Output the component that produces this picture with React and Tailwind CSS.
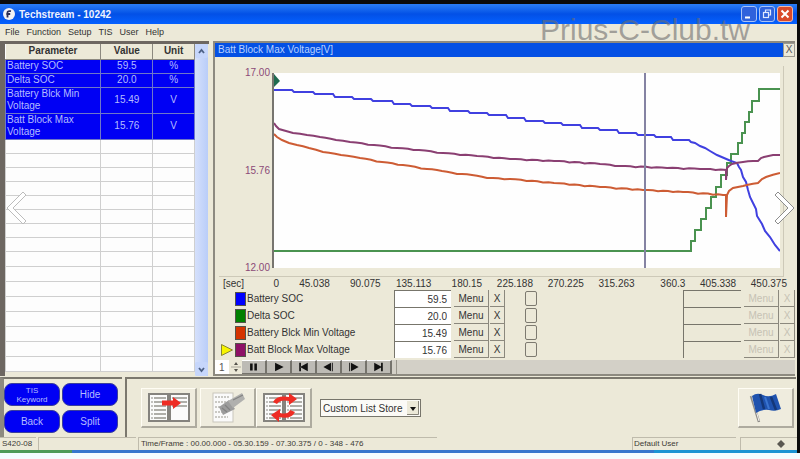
import React, { useState } from "react";

const parameters = [
  { name: "Battery SOC", value: "59.5", unit: "%" },
  { name: "Delta SOC", value: "20.0", unit: "%" },
  { name: "Battery Blck Min Voltage", value: "15.49", unit: "V", tall: true },
  { name: "Batt Block Max Voltage", value: "15.76", unit: "V", tall: true },
];

const signals = [
  { name: "Battery SOC", value: "59.5", color: "bg-[#0000ff]" },
  { name: "Delta SOC", value: "20.0", color: "bg-[#008000]" },
  { name: "Battery Blck Min Voltage", value: "15.49", color: "bg-[#d43300]" },
  { name: "Batt Block Max Voltage", value: "15.76", color: "bg-[#8e1266]", active: true },
];

const ticks = [
  "45.038", "90.075", "135.113", "180.15", "225.188",
  "270.225", "315.263", "360.3", "405.338", "450.375",
];

const menus = ["File", "Function", "Setup", "TIS", "User", "Help"];

// chart points, in plot units (506 x 195)
const socSteps = [
  [0, 17], [18, 19], [39, 21], [59, 24], [78, 26], [97, 28], [118, 31], [136, 33],
  [156, 35], [174, 38], [194, 40], [213, 42], [232, 45], [250, 48], [269, 50],
  [287, 52], [306, 55], [324, 57], [343, 60], [362, 62], [380, 64], [397, 67], [413, 67],
];
const socDrop = [
  [417, 69], [421, 70], [426, 73], [431, 75], [436, 78], [443, 82], [450, 85], [457, 88],
  [463, 90], [465, 94], [467, 97], [469, 104], [472, 109], [474, 117], [476, 124],
  [479, 130], [482, 136], [483, 143], [488, 151], [491, 158], [496, 164], [501, 172], [506, 178],
];
const deltaSteps = [
  [0, 178], [417, 168], [421, 157], [427, 146], [432, 135], [437, 124], [442, 114],
  [447, 102], [453, 90], [457, 81], [464, 70], [468, 60], [471, 49], [475, 39],
  [478, 28], [485, 16], [506, 16],
];
const maxVoltage = [
  [0, 50], [2, 53], [5, 56], [12, 58], [19, 60], [33, 62], [46, 64], [62, 67], [76, 69],
  [100, 72], [123, 75], [145, 77], [169, 80], [203, 83], [236, 86], [280, 88], [326, 91],
  [346, 93], [393, 95], [426, 96], [452, 97], [452, 107], [453, 95], [455, 93], [458, 91],
  [469, 89], [484, 88], [487, 85], [490, 84], [499, 82], [506, 82],
];
const minVoltage = [
  [0, 61], [3, 64], [8, 67], [15, 70], [23, 72], [35, 75], [49, 79], [67, 82], [86, 85],
  [108, 89], [129, 92], [153, 96], [168, 98], [183, 101], [198, 102], [213, 105],
  [236, 106], [280, 110], [326, 114], [369, 117], [409, 119], [449, 122], [452, 122],
  [452, 144], [453, 122], [455, 118], [459, 115], [469, 113], [484, 110], [488, 106],
  [492, 104], [506, 100],
];

function wobble(points) {
  const out = [];
  points.forEach(([x, y], i) => {
    out.push(`${x},${y}`);
    const next = points[i + 1];
    if (next && next[0] - x > 10) {
      const n = Math.floor((next[0] - x) / 5);
      for (let k = 1; k < n; k++) {
        const t = k / n;
        const jitter = k % 3 === 0 ? 0.5 : -0.3;
        out.push(`${x + (next[0] - x) * t},${y + (next[1] - y) * t + jitter}`);
      }
    }
  });
  return out.join(" ");
}

function stairs(points, slope) {
  const out = [`${points[0][0]},${points[0][1]}`];
  for (let i = 1; i < points.length; i++) {
    out.push(`${points[i][0]},${points[i - 1][1]}`);
    out.push(`${points[i][0] + slope},${points[i][1]}`);
  }
  return out.join(" ");
}

function Chart() {
  const line = { fill: "none", strokeWidth: 2, vectorEffect: "non-scaling-stroke" };
  return (
    <svg
      viewBox="0 0 506 195"
      preserveAspectRatio="none"
      className="block h-[195px] w-full bg-[#fefefe]"
    >
      <polyline {...line} stroke="#4a9350" points={stairs(deltaSteps, 0)} />
      <polyline {...line} stroke="#4040e0" points={`${stairs(socSteps, 2)} ${socDrop.map((p) => p.join(",")).join(" ")}`} />
      <polyline {...line} stroke="#8a3f72" points={wobble(maxVoltage)} />
      <polyline {...line} stroke="#cd5c34" points={wobble(minVoltage)} />
      <line x1="371" y1="0" x2="371" y2="195" stroke="#8583a3" strokeWidth="2" vectorEffect="non-scaling-stroke" />
      <path d="M0 1L6 8L0 14Z" fill="#1f6b50" />
    </svg>
  );
}

function TitleBar() {
  return (
    <header className="flex h-5 items-center gap-1 bg-linear-to-b from-[#2b7df5] via-[#0350e6] to-[#0561ff] pr-1 pl-[3px]">
      <svg viewBox="0 0 12 12" className="size-3">
        <circle cx="6" cy="6" r="6" fill="#f1f1f4" />
        <path d="M4.5 9.5V4.5Q4.500 2.600 8 3.200M3.300 6H7.200" stroke="#2c2f55" strokeWidth="1.800" fill="none" />
      </svg>
      <h1 className="grow text-[10px] font-bold text-[#eef3ff]">Techstream - 10242</h1>
      <div className="flex gap-[2px]">
        <button type="button" aria-label="Minimize" className="size-4 rounded-[3px] border border-[#a9c3f5] bg-[#2f62dc]">
          <svg viewBox="0 0 14 14"><path d="M3 10.500H8" stroke="#fff" strokeWidth="2" /></svg>
        </button>
        <button type="button" aria-label="Restore" className="size-4 rounded-[3px] border border-[#a9c3f5] bg-[#2f62dc]">
          <svg viewBox="0 0 14 14" fill="none" stroke="#dfe8ff" strokeWidth="1.200">
            <path d="M5.500 5V3H10.500V8H8.500" />
            <rect x="3.500" y="5.500" width="5" height="5" />
          </svg>
        </button>
        <button type="button" aria-label="Close" className="size-4 rounded-[3px] border border-[#f0b9a8] bg-[#d9492a]">
          <svg viewBox="0 0 14 14"><path d="M3.500 3.500L10.500 10.500M10.500 3.500L3.500 10.500" stroke="#fff" strokeWidth="2" /></svg>
        </button>
      </div>
    </header>
  );
}

function ParameterPanel() {
  return (
    <section className="flex w-[209px] shrink-0 border-t-[3px] border-l-[5px] border-[#6d6761] pr-[1px]">
      <table className="grow table-fixed border-collapse self-start bg-[#fdfdfd] text-[10px] leading-[12px]">
        <colgroup>
          <col className="w-[96px]" />
          <col className="w-[52px]" />
          <col className="w-[42px]" />
        </colgroup>
        <thead>
          <tr className="h-[15px] bg-[#ece9d8] text-[#333]">
            <th className="border-r border-b border-[#8c8980] p-0">Parameter</th>
            <th className="border-r border-b border-[#8c8980] p-0">Value</th>
            <th className="border-r border-b border-[#8c8980] p-0">Unit</th>
          </tr>
        </thead>
        <tbody>
          {parameters.map((p) => (
            <tr key={p.name} className={p.tall ? "h-[26px] bg-[#0000f4] text-[#b4bcff]" : "h-[14px] bg-[#0000f4] text-[#b4bcff]"}>
              <td className="border border-[#6f78c8] py-0 pr-3 pl-[1px]">{p.name}</td>
              <td className="border border-[#6f78c8] p-0 text-center">{p.value}</td>
              <td className="border border-[#6f78c8] p-0 text-center">{p.unit}</td>
            </tr>
          ))}
          {Array.from({ length: 16 }, (_, i) => (
            <tr key={i} className={i < 8 ? "h-[14px]" : "h-[15px]"}>
              <td className="border border-[#cfcfcf] p-0" />
              <td className="border border-[#cfcfcf] p-0" />
              <td className="border border-[#cfcfcf] p-0" />
            </tr>
          ))}
        </tbody>
      </table>
      <div className="flex w-[13px] shrink-0 flex-col justify-between bg-linear-to-r from-[#d5e0fb] to-[#b9cdf9]">
        <button type="button" aria-label="Scroll up" className="h-[14px] rounded-xs bg-[#c6d6fb]">
          <svg viewBox="0 0 13 14"><path d="M4 9L6.500 6L9 9" fill="none" stroke="#4d6185" strokeWidth="1.800" /></svg>
        </button>
        <button type="button" aria-label="Scroll down" className="h-[14px] rounded-xs bg-[#c6d6fb]">
          <svg viewBox="0 0 13 14"><path d="M4 6L6.500 9L9 6" fill="none" stroke="#4d6185" strokeWidth="1.800" /></svg>
        </button>
      </div>
    </section>
  );
}

function RowButtons({ name, disabled }) {
  const tone = disabled ? "text-[#c6c2b4]" : "text-[#333]";
  return (
    <>
      <button type="button" disabled={disabled} aria-label={`Menu ${name}`} className={`ml-[3px] h-[17px] w-[35px] border-r border-b border-[#8b887d] text-[10px] ${tone}`}>
        Menu
      </button>
      <button type="button" disabled={disabled} aria-label={`Remove ${name}`} className={`ml-[1px] h-[17px] w-[15px] border-r border-b border-[#8b887d] text-[10px] ${tone}`}>
        X
      </button>
    </>
  );
}

function SignalRow({ signal }) {
  return (
    <li className="flex h-[17px] items-center">
      <div className="flex w-[20px] shrink-0 justify-center pl-1">
        {signal.active && (
          <svg viewBox="0 0 14 14" className="size-[14px]">
            <path d="M1.500 1.500L12.500 7L1.500 12.500Z" fill="#f7f400" stroke="#8a8733" />
          </svg>
        )}
      </div>
      <span className={`h-[14px] w-[11px] shrink-0 border border-[#55534a] ${signal.color}`} />
      <label htmlFor={`value-${signal.name}`} className="w-[148px] shrink-0 pl-[1px] text-[10px] leading-[14px] text-[#333]">
        {signal.name}
      </label>
      <input
        id={`value-${signal.name}`}
        readOnly
        value={signal.value}
        className="h-[17px] w-[57px] shrink-0 border-t border-l border-[#77756b] bg-white pr-1 text-right text-[10px] text-[#333]"
      />
      <RowButtons name={signal.name} />
      <input
        type="checkbox"
        aria-label={`Select ${signal.name}`}
        className="ml-5 h-[15px] w-[12px] appearance-none rounded-[2px] border border-[#7d7a70]"
      />
      <input
        readOnly
        disabled
        aria-label={`Second value ${signal.name}`}
        className="ml-auto h-[17px] w-[58px] border-t border-l border-[#77756b]"
      />
      <RowButtons name={`second ${signal.name}`} disabled />
    </li>
  );
}

const playback = [
  { label: "Pause", d: "M8 3H11V11H8ZM13 3H16V11H13Z" },
  { label: "Play", d: "M8 2L18 7L8 12Z" },
  { label: "First", d: "M17 2L8 7L17 12ZM7 2H9V12H7Z" },
  { label: "Step back", d: "M15 2L6 7L15 12ZM16 2H17V12H16Z" },
  { label: "Step forward", d: "M9 2L18 7L9 12ZM7 2H8V12H7Z" },
  { label: "Last", d: "M7 2L16 7L7 12ZM15 2H17V12H15Z" },
];

function GraphPanel() {
  return (
    <section className="flex min-w-0 grow flex-col border-t-2 border-b-2 border-l-2 border-[#8d8a80] bg-[#ece9d8]">
      <div className="flex h-[14px] items-center bg-[#0450e4]">
        <h2 className="grow pl-[3px] text-[10px] leading-[14px] text-[#b9d0ff]">Batt Block Max Voltage[V]</h2>
        <button type="button" aria-label="Close graph" className="h-[14px] w-[12px] border border-[#9b9a90] bg-[#ece9d8] text-[10px] leading-[12px] text-[#555]">
          X
        </button>
      </div>
      <div className="mt-[9px] mr-[11px] ml-1 flex border-r border-b border-[#cdc9b8] pr-[3px] pb-[1px]">
        <div className="flex w-[53px] shrink-0 flex-col justify-between pr-[2px] text-right text-[10px] leading-[14px] text-[#8b4a77]">
          <span>17.00</span>
          <span>15.76</span>
          <span>12.00</span>
        </div>
        <div className="mt-[7px] mb-[7px] min-w-0 grow border-l-2 border-[#77756f]">
          <Chart />
        </div>
      </div>
      <div className="flex pr-2 text-[10px] leading-[13px] text-[#333]">
        <span className="w-[50px] shrink-0 pl-2">[sec]</span>
        <span className="w-[14px] shrink-0 text-right">0</span>
        {ticks.map((t) => (
          <span key={t} className="min-w-0 flex-1 text-right">{t}</span>
        ))}
      </div>
      <ul className="mb-[2px]">
        {signals.map((s) => (
          <SignalRow key={s.name} signal={s} />
        ))}
      </ul>
      <div className="flex h-[14px] bg-[#d3d0c7]">
        <input aria-label="Speed" readOnly value="1" className="w-[14px] bg-white pl-1 text-[10px] text-[#555]" />
        <div className="flex w-[13px] flex-col items-center justify-center bg-[#ece9d8]">
          <svg viewBox="0 0 12 14" className="w-3">
            <path d="M4 5L6 2L8 5ZM4 9L6 12L8 9Z" fill="#55534c" />
            <path d="M1 7H11" stroke="#aaa79a" />
          </svg>
        </div>
        {playback.map((b) => (
          <button key={b.label} type="button" aria-label={b.label} className="w-[25px] border-t border-r-2 border-b border-t-white border-r-[#75736c] border-b-[#75736c] bg-[#bdbbb5]">
            <svg viewBox="0 0 24 14" className="h-3 w-full"><path d={b.d} fill="#111" /></svg>
          </button>
        ))}
        <div className="ml-1 grow border-l border-[#99968c]" />
      </div>
    </section>
  );
}

function Sheet({ x, half }) {
  return (
    <g>
      <rect x={x} y="1" width="19" height="27" fill="#fbfbfb" stroke="#85837e" strokeWidth="2" />
      <path
        d={half ? `M${x + 2} 5H${x + 17}M${x + 2} 9H${x + 17}M${x + 2} 13H${x + 17}` : `M${x + 5} 5H${x + 17}M${x + 5} 9H${x + 17}M${x + 5} 13H${x + 17}M${x + 5} 17H${x + 17}M${x + 5} 21H${x + 17}M${x + 5} 25H${x + 17}`}
        stroke="#97958f"
        strokeWidth="1.500"
      />
      {!half && <path d={`M${x + 3} 4V26`} stroke="#8b8984" strokeDasharray="2 2" />}
    </g>
  );
}

function ToolButton({ label, children }) {
  return (
    <button
      type="button"
      aria-label={label}
      className="flex h-10 w-14 shrink-0 items-center justify-center border-t border-r-2 border-b-2 border-l border-t-[#fffdf4] border-r-[#aeab9f] border-b-[#aeab9f] border-l-[#fffdf4] bg-[#efecde]"
    >
      {children}
    </button>
  );
}

function Toolbar() {
  const pill = "h-[23px] rounded-lg bg-[#0000f4] border border-[#3a3f9c] text-[#b4bcff]";
  return (
    <div className="flex gap-[3px] bg-[#ece9d8] pt-[1px] pr-[1px]">
      <div className="grid w-[122px] shrink-0 grid-cols-[56px_56px] content-center gap-x-[2px] gap-y-1 border-t-2 border-l-4 border-t-[#7b786e] border-l-[#8d8a80] py-1">
        <button type="button" className={`${pill} text-[8px] leading-[9px]`}>TIS<br />Keyword</button>
        <button type="button" className={`${pill} text-[10px]`}>Hide</button>
        <button type="button" className={`${pill} text-[10px]`}>Back</button>
        <button type="button" className={`${pill} text-[10px]`}>Split</button>
      </div>
      <div className="flex grow items-center border-t-2 border-l-2 border-[#7b786e] pr-[2px] pl-[14px]">
        <ToolButton label="Copy to list">
          <svg viewBox="0 0 42 29" className="w-[42px]">
            <Sheet x={1} />
            <Sheet x={22} half />
            <path d="M14 7.500H25V4L33 10L25 16V12.500H14Z" fill="#ee2c24" />
          </svg>
        </ToolButton>
        <span className="w-[3px]" />
        <ToolButton label="Search list">
          <svg viewBox="0 0 36 31" className="w-9">
            <rect x="3" y="1" width="20" height="29" fill="#fafafa" stroke="#c9c6bc" />
            <path d="M5 5H20M5 10H16M5 15H12M5 20H12M5 25H18" stroke="#bbb9b2" strokeWidth="1.500" strokeDasharray="2 1" />
            <path d="M9 15L19 8L25 17L13 23Z" fill="#9c9c9c" />
            <path d="M18 9L32 1L35 7L23 16Z" fill="#b0b0ae" />
            <path d="M12 16L17 20M15 13L20 18M23 8L33 3" stroke="#828282" strokeWidth="1.200" />
          </svg>
        </ToolButton>
        <ToolButton label="Swap lists">
          <svg viewBox="0 0 42 29" className="w-[42px]">
            <Sheet x={1} />
            <Sheet x={22} />
            <path d="M10 9Q14 2 26 4V0L34 6L26 12V8Q17 6 14 11Z" fill="#ee2c24" />
            <path d="M32 19Q28 27 16 24V29L8 22L17 16V20Q25 22 27 17Z" fill="#ee2c24" />
          </svg>
        </ToolButton>
        <div className="relative ml-2">
          <select
            aria-label="Custom list"
            className="block h-[18px] w-[101px] appearance-none border border-[#77756b] bg-[#fbfaf6] pl-[2px] text-[10px] text-[#333]"
          >
            <option>Custom List Store</option>
          </select>
          <svg viewBox="0 0 12 14" className="pointer-events-none absolute top-[2px] right-[2px] w-3 bg-[#ece9d8]">
            <path d="M3 6H9L6 10Z" fill="#111" />
            <path d="M0 13.500H11.500V0" stroke="#88857a" fill="none" />
          </svg>
        </div>
        <div className="ml-auto">
          <ToolButton label="Flag">
            <svg viewBox="0 0 34 32" className="w-[34px]">
              <path d="M2 4L10 30" stroke="#8e8c88" strokeWidth="2.500" />
              <path d="M3 4L10 29" stroke="#f4f3ee" strokeWidth="1" />
              <path d="M3 4Q8 0 14 3Q20 6 27 2L32 17Q26 20 20 18Q13 17 7 21Z" fill="#1f52ae" />
              <path d="M11 2L15 17M22 5L27 18" stroke="#143779" strokeWidth="2.500" />
              <path d="M16 5L20 17" stroke="#3a74d0" strokeWidth="2" />
            </svg>
          </ToolButton>
        </div>
      </div>
    </div>
  );
}

function StatusBar() {
  return (
    <footer className="flex h-[13px] bg-[#ece9d8] text-[8px] leading-[11px] text-[#3c3a35]">
      <span className="w-[36px] shrink-0 border-t border-[#bfbbac] pl-[2px]">S420-08</span>
      <span className="ml-[2px] w-[98px] shrink-0 border-t border-l border-[#bfbbac]" />
      <span className="ml-[2px] w-[299px] shrink-0 border-t border-l border-[#bfbbac] pl-[2px]">
        Time/Frame : 00.00.000 - 05.30.159 - 07.30.375 / 0 - 348 - 476
      </span>
      <span className="grow" />
      <span className="w-[104px] shrink-0 border-t border-l border-[#bfbbac] pl-[1px]">Default User</span>
      <span className="ml-1 flex w-[57px] shrink-0 items-center justify-end border-t border-l border-[#bfbbac] pr-3">
        <svg viewBox="0 0 8 8" className="size-2"><path d="M4 0L8 4L4 8L0 4Z" fill="#5a5851" /></svg>
      </span>
    </footer>
  );
}

export default function App() {
  const [page, setPage] = useState(0);

  return (
    <div className="relative min-h-screen overflow-hidden bg-[#f3fcff] font-['Liberation_Sans',Arial,sans-serif]">
      <div className="border-t-4 border-r-[3px] border-[#0b0b0b] bg-[#ece9d8]">
        <TitleBar />
        <nav className="flex h-[17px] items-center gap-[7px] pl-[5px] text-[9px] text-[#333]">
          {menus.map((m) => (
            <a key={m} href="#">{m}</a>
          ))}
        </nav>
        <main className="flex gap-1 pr-[2px]">
          <ParameterPanel />
          <GraphPanel />
        </main>
        <Toolbar />
        <StatusBar />
        <div className="flex h-[3px] bg-[#3576cd]">
          <span className="w-[72px] bg-[#4d9a58]" />
          <span className="ml-auto w-[18%] bg-[#1b93d3]" />
        </div>
      </div>

      <p className="pointer-events-none absolute top-[13px] right-[50px] text-[30px] leading-[34px] text-[#6e6e6e]/60">
        Prius-C-Club.tw
      </p>
      <button type="button" aria-label="Previous" onClick={() => setPage(page - 1)} className="absolute top-[190px] left-[6px]">
        <svg viewBox="0 0 22 36" className="w-[22px]">
          <path d="M17 2L1 18L17 34L20 31L7 18L20 5Z" fill="#fff" stroke="#bcbcbc" />
        </svg>
      </button>
      <button type="button" aria-label="Next" onClick={() => setPage(page + 1)} className="absolute top-[190px] right-1">
        <svg viewBox="0 0 22 36" className="w-[22px]">
          <path d="M4 2L20 18L4 34L1 31L14 18L1 5Z" fill="#fff" stroke="#8d8d8d" />
        </svg>
      </button>
    </div>
  );
}
